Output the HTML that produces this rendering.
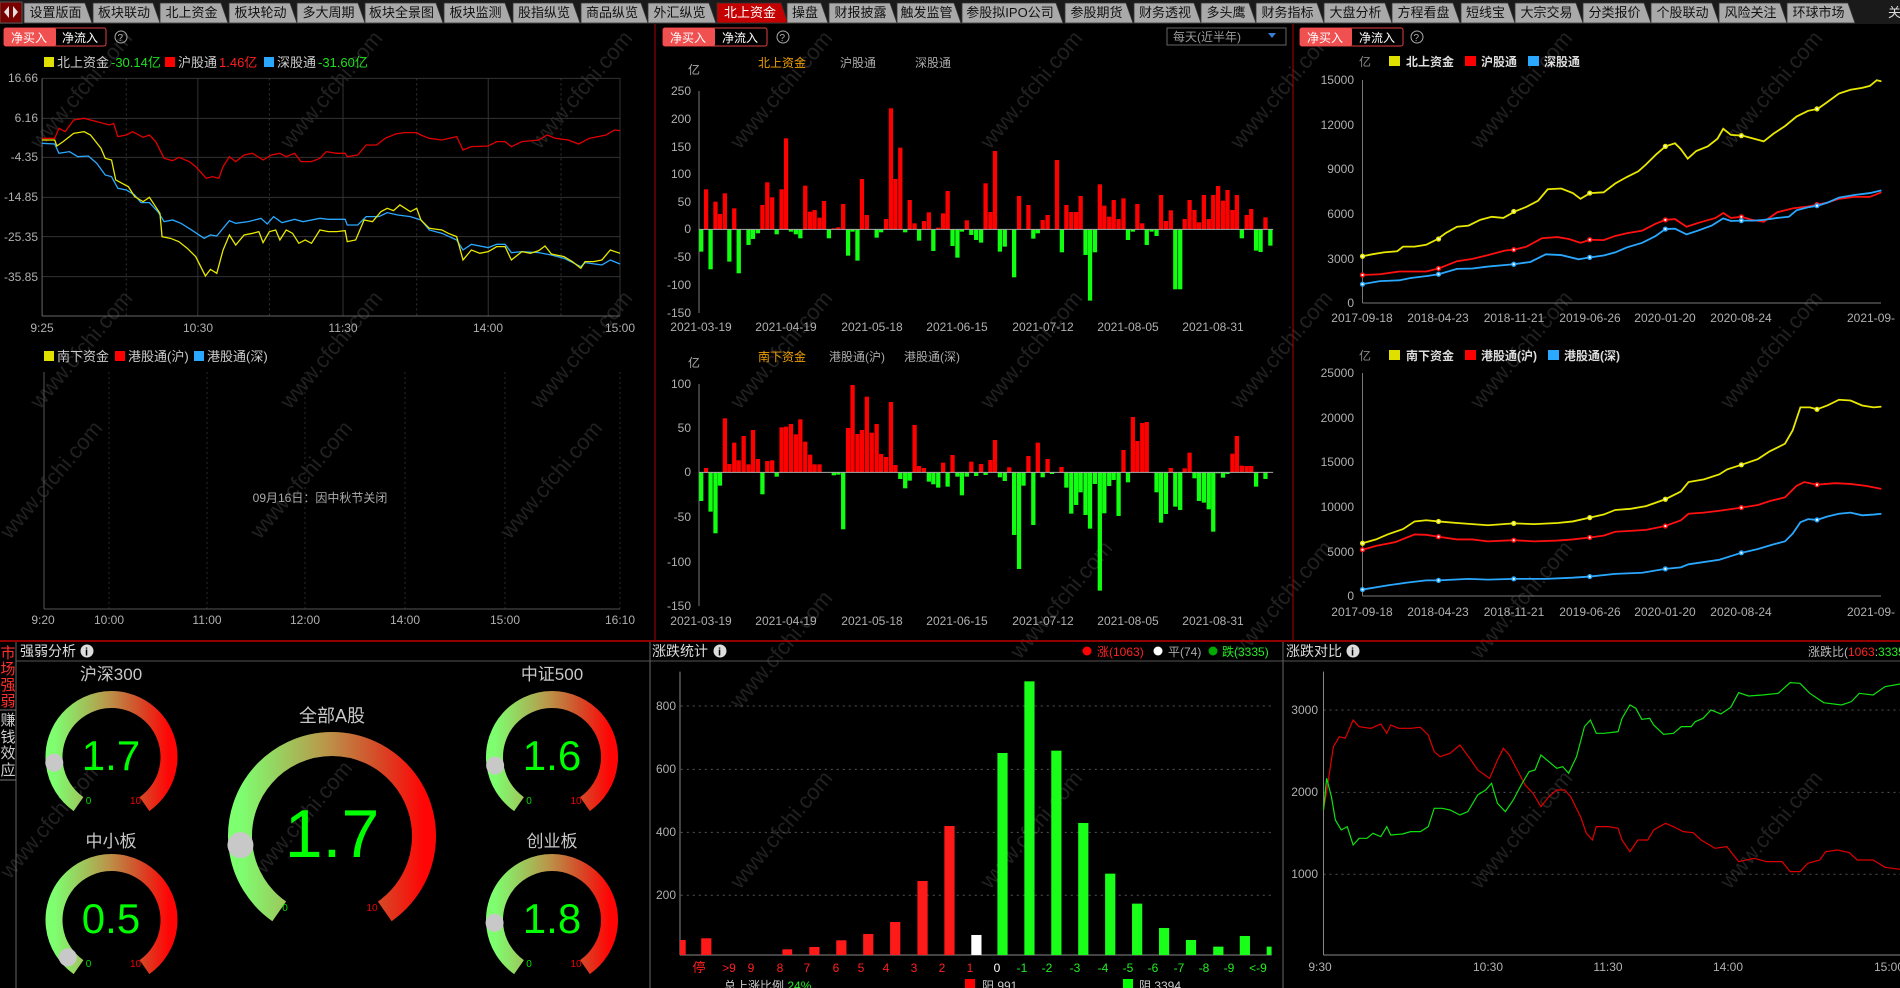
<!DOCTYPE html>
<html><head><meta charset="utf-8">
<style>
html,body{margin:0;padding:0;background:#000;width:1900px;height:988px;overflow:hidden}
svg{display:block}
text{font-family:"Liberation Sans","Noto Sans CJK SC",sans-serif}
.ax{fill:#b0b0b0;font-size:12px}
.tab{fill:#111;font-size:13px;text-anchor:middle}
.wm{fill:#3c3c3c;font-size:22px;opacity:.55}
</style></head><body>
<svg id="s" width="1900" height="988" viewBox="0 0 1900 988" xmlns="http://www.w3.org/2000/svg">
<defs>
<linearGradient id="gg" x1="0" y1="0" x2="1" y2="0">
<stop offset="0" stop-color="#7dff70"/><stop offset="0.45" stop-color="#b89a4c"/><stop offset="0.75" stop-color="#d54a28"/><stop offset="1" stop-color="#ff0505"/>
</linearGradient>
</defs>
<rect width="1900" height="988" fill="#000"/>

<!-- watermarks -->
<g class="wm">
<text transform="translate(40,150) rotate(-50)">www.cfchi.com</text>
<text transform="translate(290,150) rotate(-50)">www.cfchi.com</text>
<text transform="translate(540,150) rotate(-50)">www.cfchi.com</text>
<text transform="translate(740,150) rotate(-50)">www.cfchi.com</text>
<text transform="translate(990,150) rotate(-50)">www.cfchi.com</text>
<text transform="translate(1240,150) rotate(-50)">www.cfchi.com</text>
<text transform="translate(1480,150) rotate(-50)">www.cfchi.com</text>
<text transform="translate(1730,150) rotate(-50)">www.cfchi.com</text>
<text transform="translate(40,410) rotate(-50)">www.cfchi.com</text>
<text transform="translate(290,410) rotate(-50)">www.cfchi.com</text>
<text transform="translate(540,410) rotate(-50)">www.cfchi.com</text>
<text transform="translate(740,410) rotate(-50)">www.cfchi.com</text>
<text transform="translate(990,410) rotate(-50)">www.cfchi.com</text>
<text transform="translate(1240,410) rotate(-50)">www.cfchi.com</text>
<text transform="translate(1480,410) rotate(-50)">www.cfchi.com</text>
<text transform="translate(1730,410) rotate(-50)">www.cfchi.com</text>
<text transform="translate(10,540) rotate(-50)">www.cfchi.com</text>
<text transform="translate(260,540) rotate(-50)">www.cfchi.com</text>
<text transform="translate(510,540) rotate(-50)">www.cfchi.com</text>
<text transform="translate(1240,660) rotate(-50)">www.cfchi.com</text>
<text transform="translate(1020,660) rotate(-50)">www.cfchi.com</text>
<text transform="translate(740,710) rotate(-50)">www.cfchi.com</text>
<text transform="translate(990,890) rotate(-50)">www.cfchi.com</text>
<text transform="translate(740,890) rotate(-50)">www.cfchi.com</text>
<text transform="translate(1480,890) rotate(-50)">www.cfchi.com</text>
<text transform="translate(1730,890) rotate(-50)">www.cfchi.com</text>
<text transform="translate(260,880) rotate(-50)">www.cfchi.com</text>
<text transform="translate(10,880) rotate(-50)">www.cfchi.com</text>
<text transform="translate(1480,660) rotate(-50)">www.cfchi.com</text>
</g>

<!-- tab bar -->
<rect x="0" y="0" width="1900" height="24" fill="#1a1a1a"/>
<rect x="0" y="2" width="22" height="21" fill="#7a0000" stroke="#555"/>
<path d="M4 12 L9 6 L9 18Z M18 12 L13 6 L13 18Z" fill="#e0e0e0"/>
<g id="tabs"></g>
<text x="1888" y="17" fill="#ddd" font-size="13">关</text>

<!-- panel separators -->
<line x1="655" y1="24" x2="655" y2="640" stroke="#b00000"/>
<line x1="1293" y1="24" x2="1293" y2="640" stroke="#b00000"/>
<line x1="0" y1="641" x2="1900" y2="641" stroke="#c00000" stroke-width="1.5"/>
<line x1="16" y1="642" x2="16" y2="988" stroke="#666"/>
<line x1="650" y1="642" x2="650" y2="988" stroke="#666"/>
<line x1="1283" y1="642" x2="1283" y2="988" stroke="#666"/>
<line x1="16" y1="661" x2="1900" y2="661" stroke="#555"/>

<!-- buttons 净买入 净流入 -->
<g font-size="12">
<rect x="4" y="28" width="102" height="18" fill="#000" stroke="#e04040" rx="2"/><rect x="4" y="28" width="52" height="18" fill="#f05050" rx="2"/>
<text x="11" y="42" fill="#fff">净买入</text><text x="62" y="42" fill="#fff">净流入</text>
<circle cx="121" cy="37" r="6" fill="none" stroke="#aaa"/><text x="117.5" y="41" fill="#aaa" font-size="10">?</text>
<rect x="663" y="28" width="104" height="18" fill="#000" stroke="#e04040" rx="2"/><rect x="663" y="28" width="52" height="18" fill="#f05050" rx="2"/>
<text x="670" y="42" fill="#fff">净买入</text><text x="722" y="42" fill="#fff">净流入</text>
<circle cx="783" cy="37" r="6" fill="none" stroke="#aaa"/><text x="779.5" y="41" fill="#aaa" font-size="10">?</text>
<rect x="1300" y="28" width="103" height="18" fill="#000" stroke="#e04040" rx="2"/><rect x="1300" y="28" width="52" height="18" fill="#f05050" rx="2"/>
<text x="1307" y="42" fill="#fff">净买入</text><text x="1359" y="42" fill="#fff">净流入</text>
<circle cx="1417" cy="37" r="6" fill="none" stroke="#aaa"/><text x="1413.5" y="41" fill="#aaa" font-size="10">?</text>
<rect x="1167" y="28" width="119" height="17" fill="#000" stroke="#666"/>
<text x="1173" y="41" fill="#999">每天(近半年)</text><path d="M1268 33 L1276 33 L1272 38Z" fill="#3a7bd5"/>
</g>

<!-- ===== TOP LEFT ===== -->
<g font-size="13">
<rect x="44" y="57" width="10" height="10" fill="#e0e000"/><text x="57" y="67" fill="#ccc">北上资金</text><text x="111" y="67" fill="#1ee01e">-30.14亿</text>
<rect x="165" y="57" width="10" height="10" fill="#f00"/><text x="178" y="67" fill="#ccc">沪股通</text><text x="219" y="67" fill="#ff2020">1.46亿</text>
<rect x="264" y="57" width="10" height="10" fill="#2aa8ff"/><text x="277" y="67" fill="#ccc">深股通</text><text x="318" y="67" fill="#1ee01e">-31.60亿</text>
</g>
<g class="ax" text-anchor="end">
<text x="38" y="82">16.66</text><text x="38" y="122">6.16</text><text x="38" y="161">-4.35</text><text x="38" y="201">-14.85</text><text x="38" y="241">-25.35</text><text x="38" y="281">-35.85</text>
</g>
<g class="ax" text-anchor="middle">
<text x="42" y="332">9:25</text><text x="198" y="332">10:30</text><text x="343" y="332">11:30</text><text x="488" y="332">14:00</text><text x="620" y="332">15:00</text>
</g>
<g transform="translate(0,60) scale(0.4209,0.3333)" fill="none">
<g stroke="#333" vector-effect="non-scaling-stroke">
<line x1="100" y1="55" x2="1473" y2="55" vector-effect="non-scaling-stroke"/>
<line x1="100" y1="175" x2="1473" y2="175" vector-effect="non-scaling-stroke"/>
<line x1="100" y1="292" x2="1473" y2="292" vector-effect="non-scaling-stroke"/>
<line x1="100" y1="412" x2="1473" y2="412" vector-effect="non-scaling-stroke"/>
<line x1="100" y1="530" x2="1473" y2="530" vector-effect="non-scaling-stroke"/>
<line x1="100" y1="650" x2="1473" y2="650" vector-effect="non-scaling-stroke"/>
<line x1="470" y1="55" x2="470" y2="768" vector-effect="non-scaling-stroke"/>
<line x1="815" y1="55" x2="815" y2="768" vector-effect="non-scaling-stroke"/>
<line x1="1160" y1="55" x2="1160" y2="768" vector-effect="non-scaling-stroke"/>
<line x1="1473" y1="55" x2="1473" y2="768" vector-effect="non-scaling-stroke"/>
<line x1="300" y1="55" x2="300" y2="768" stroke-dasharray="2 3" vector-effect="non-scaling-stroke"/>
<line x1="640" y1="55" x2="640" y2="768" stroke-dasharray="2 3" vector-effect="non-scaling-stroke"/>
<line x1="990" y1="55" x2="990" y2="768" stroke-dasharray="2 3" vector-effect="non-scaling-stroke"/>
<line x1="1333" y1="55" x2="1333" y2="768" stroke-dasharray="2 3" vector-effect="non-scaling-stroke"/>
</g>
<line x1="100" y1="55" x2="100" y2="768" stroke="#666" vector-effect="non-scaling-stroke"/>
<line x1="100" y1="768" x2="1473" y2="768" stroke="#666" vector-effect="non-scaling-stroke"/>
<polyline stroke="#e00000" stroke-width="1.3" vector-effect="non-scaling-stroke" points="100,235 130,235 140,205 155,215 175,180 200,175 230,185 260,195 270,190 280,230 300,225 315,215 340,232 355,225 370,245 390,295 410,302 425,292 450,305 465,320 490,355 505,350 520,355 530,320 545,290 560,305 580,285 600,280 625,300 645,285 665,280 680,290 700,280 715,305 740,305 760,295 775,275 800,280 820,280 825,290 850,285 870,255 895,255 915,235 940,222 960,218 990,218 1000,225 1020,235 1050,240 1085,230 1100,270 1120,260 1160,258 1180,245 1200,245 1215,260 1240,245 1280,240 1300,225 1320,235 1350,240 1375,252 1400,235 1440,225 1460,210 1473,212"/>
<polyline stroke="#2aa8ff" stroke-width="1.3" vector-effect="non-scaling-stroke" points="100,250 130,252 140,280 165,275 185,290 210,288 230,310 250,345 265,350 280,385 300,390 320,405 335,428 355,428 375,455 390,485 410,480 430,490 455,510 485,535 500,525 515,528 545,482 560,490 590,485 620,475 635,492 650,470 670,488 700,478 720,485 760,475 780,478 820,478 825,495 850,495 870,470 900,470 920,458 945,465 975,470 1000,480 1020,510 1050,520 1085,540 1100,570 1120,553 1160,563 1180,553 1200,553 1215,578 1240,575 1280,578 1310,585 1340,595 1380,620 1390,608 1430,615 1450,600 1473,612"/>
<polyline stroke="#e8e800" stroke-width="1.3" vector-effect="non-scaling-stroke" points="100,240 130,240 135,258 150,245 175,220 200,215 215,225 240,265 250,295 265,300 275,360 290,370 305,380 320,410 340,425 355,412 380,460 385,530 405,535 425,545 445,565 465,590 488,648 500,628 515,640 530,570 545,525 560,555 580,525 600,520 615,515 625,548 640,515 655,510 665,540 680,510 695,520 710,550 725,540 740,550 760,510 780,515 800,515 820,512 825,545 845,540 865,480 885,485 905,455 920,445 935,452 950,435 975,455 990,445 1000,480 1020,505 1050,510 1065,520 1085,530 1100,600 1120,570 1140,580 1160,575 1180,560 1200,560 1215,600 1240,575 1260,580 1280,572 1295,558 1310,582 1340,590 1360,605 1380,625 1390,605 1410,605 1430,600 1450,570 1473,580"/>
</g>
<!-- lower left -->
<g font-size="13">
<rect x="44" y="351" width="10" height="10" fill="#e0e000"/><text x="57" y="361" fill="#ccc">南下资金</text>
<rect x="115" y="351" width="10" height="10" fill="#f00"/><text x="128" y="361" fill="#ccc">港股通(沪)</text>
<rect x="194" y="351" width="10" height="10" fill="#2aa8ff"/><text x="207" y="361" fill="#ccc">港股通(深)</text>
</g>
<g stroke="#2a2a2a" stroke-dasharray="2 3">
<line x1="109" y1="372" x2="109" y2="609"/><line x1="207" y1="372" x2="207" y2="609"/><line x1="305" y1="372" x2="305" y2="609"/><line x1="405" y1="372" x2="405" y2="609"/><line x1="505" y1="372" x2="505" y2="609"/><line x1="620" y1="372" x2="620" y2="609"/>
</g>
<line x1="44" y1="372" x2="44" y2="609" stroke="#555"/>
<line x1="44" y1="609" x2="620" y2="609" stroke="#555"/>
<text x="320" y="502" fill="#aaa" font-size="12" text-anchor="middle">09月16日：因中秋节关闭</text>
<g class="ax" text-anchor="middle">
<text x="43" y="624">9:20</text><text x="109" y="624">10:00</text><text x="207" y="624">11:00</text><text x="305" y="624">12:00</text><text x="405" y="624">14:00</text><text x="505" y="624">15:00</text><text x="620" y="624">16:10</text>
</g>

<!-- ===== TOP MIDDLE ===== -->
<g font-size="12">
<text x="758" y="67" fill="#f0a000">北上资金</text><text x="840" y="67" fill="#aaa">沪股通</text><text x="915" y="67" fill="#aaa">深股通</text>
<text x="688" y="74" fill="#aaa">亿</text>
<text x="758" y="361" fill="#f0a000">南下资金</text><text x="829" y="361" fill="#aaa">港股通(沪)</text><text x="904" y="361" fill="#aaa">港股通(深)</text>
<text x="688" y="367" fill="#aaa">亿</text>
</g>
<g class="ax" text-anchor="end">
<text x="691" y="95">250</text><text x="691" y="123">200</text><text x="691" y="151">150</text><text x="691" y="178">100</text><text x="691" y="206">50</text><text x="691" y="233">0</text><text x="691" y="261">-50</text><text x="691" y="289">-100</text><text x="691" y="317">-150</text>
<text x="691" y="388">100</text><text x="691" y="432">50</text><text x="691" y="476">0</text><text x="691" y="521">-50</text><text x="691" y="566">-100</text><text x="691" y="610">-150</text>
</g>
<g class="ax" text-anchor="middle">
<text x="701" y="331">2021-03-19</text><text x="786" y="331">2021-04-19</text><text x="872" y="331">2021-05-18</text><text x="957" y="331">2021-06-15</text><text x="1043" y="331">2021-07-12</text><text x="1128" y="331">2021-08-05</text><text x="1213" y="331">2021-08-31</text>
<text x="701" y="625">2021-03-19</text><text x="786" y="625">2021-04-19</text><text x="872" y="625">2021-05-18</text><text x="957" y="625">2021-06-15</text><text x="1043" y="625">2021-07-12</text><text x="1128" y="625">2021-08-05</text><text x="1213" y="625">2021-08-31</text>
</g>
<line x1="699" y1="91" x2="699" y2="313" stroke="#777"/>
<line x1="699" y1="384" x2="699" y2="606" stroke="#777"/>
<g id="m1" transform="translate(655,40) scale(0.408,0.3333)"></g>
<g id="m2" transform="translate(655,340) scale(0.408,0.3333)"></g>

<!-- ===== TOP RIGHT ===== -->
<g font-size="12" font-weight="bold">
<text x="1359" y="66" fill="#888" font-weight="normal">亿</text>
<rect x="1389" y="56" width="11" height="10" fill="#e0e000"/><text x="1406" y="66" fill="#ddd">北上资金</text>
<rect x="1465" y="56" width="11" height="10" fill="#f00"/><text x="1481" y="66" fill="#ddd">沪股通</text>
<rect x="1528" y="56" width="11" height="10" fill="#2aa8ff"/><text x="1544" y="66" fill="#ddd">深股通</text>
<text x="1359" y="360" fill="#888" font-weight="normal">亿</text>
<rect x="1389" y="350" width="11" height="10" fill="#e0e000"/><text x="1406" y="360" fill="#ddd">南下资金</text>
<rect x="1465" y="350" width="11" height="10" fill="#f00"/><text x="1481" y="360" fill="#ddd">港股通(沪)</text>
<rect x="1548" y="350" width="11" height="10" fill="#2aa8ff"/><text x="1564" y="360" fill="#ddd">港股通(深)</text>
</g>
<g class="ax" text-anchor="end" fill="#999">
<text x="1354" y="84">15000</text><text x="1354" y="129">12000</text><text x="1354" y="173">9000</text><text x="1354" y="218">6000</text><text x="1354" y="263">3000</text><text x="1354" y="307">0</text>
<text x="1354" y="377">25000</text><text x="1354" y="422">20000</text><text x="1354" y="466">15000</text><text x="1354" y="511">10000</text><text x="1354" y="556">5000</text><text x="1354" y="600">0</text>
</g>
<g class="ax" text-anchor="middle" fill="#999">
<text x="1362" y="322">2017-09-18</text><text x="1438" y="322">2018-04-23</text><text x="1514" y="322">2018-11-21</text><text x="1590" y="322">2019-06-26</text><text x="1665" y="322">2020-01-20</text><text x="1741" y="322">2020-08-24</text><text x="1847" y="322" text-anchor="start">2021-09-</text>
<text x="1362" y="616">2017-09-18</text><text x="1438" y="616">2018-04-23</text><text x="1514" y="616">2018-11-21</text><text x="1590" y="616">2019-06-26</text><text x="1665" y="616">2020-01-20</text><text x="1741" y="616">2020-08-24</text><text x="1847" y="616" text-anchor="start">2021-09-</text>
</g>
<g stroke="#777">
<line x1="1362.5" y1="80" x2="1362.5" y2="303"/><line x1="1362.5" y1="303" x2="1881" y2="303"/>
<line x1="1362.5" y1="373" x2="1362.5" y2="596"/><line x1="1362.5" y1="596" x2="1881" y2="596"/>
</g>
<g transform="translate(1295,40) scale(0.3858,0.3827)" fill="none" stroke-width="1.8">
<polyline stroke="#e8e800" vector-effect="non-scaling-stroke" points="175,565 200,560 230,555 265,552 280,540 310,540 340,535 370,520 390,505 420,488 450,485 480,470 510,462 540,465 570,448 600,436 630,420 655,390 690,388 720,400 740,415 765,400 800,398 830,375 860,358 890,343 910,325 935,300 960,278 985,270 1000,285 1018,310 1040,290 1070,278 1095,258 1110,232 1130,248 1160,250 1190,258 1215,265 1240,245 1270,225 1300,200 1330,185 1355,180 1380,162 1410,140 1440,130 1470,125 1490,120 1508,105 1520,108"/>
<polyline stroke="#ff1010" vector-effect="non-scaling-stroke" points="175,614 220,612 270,605 300,605 340,605 372,597 420,578 460,572 500,562 545,550 567,548 600,540 640,518 680,515 710,520 740,530 765,522 800,523 830,512 860,505 900,498 935,480 960,470 985,468 1015,488 1045,478 1090,465 1110,452 1130,465 1157,462 1185,470 1215,475 1250,450 1290,440 1330,435 1355,430 1380,425 1410,415 1450,410 1490,410 1520,398"/>
<polyline stroke="#2aa8ff" vector-effect="non-scaling-stroke" points="175,638 220,630 270,628 300,622 340,617 372,612 420,598 460,597 500,592 545,588 567,586 610,580 650,560 690,562 735,573 765,568 800,563 830,555 860,542 900,530 935,512 960,494 985,493 1015,508 1045,498 1080,485 1110,466 1130,473 1157,472 1190,472 1215,470 1250,465 1280,462 1300,445 1330,437 1355,433 1380,425 1410,412 1450,405 1490,400 1520,393"/>
<polyline stroke="#e8e800" vector-effect="non-scaling-stroke" points="175,1315 210,1305 240,1292 280,1278 310,1258 340,1255 372,1258 420,1262 460,1265 500,1268 567,1263 620,1265 680,1262 720,1258 764,1248 800,1240 830,1228 870,1225 910,1218 960,1200 1000,1180 1020,1155 1060,1148 1100,1135 1120,1122 1157,1110 1200,1095 1230,1075 1270,1055 1290,1020 1310,960 1335,960 1353,965 1380,955 1410,940 1440,942 1470,955 1500,960 1520,958"/>
<polyline stroke="#ff1010" vector-effect="non-scaling-stroke" points="175,1332 210,1322 260,1312 290,1300 310,1292 340,1293 372,1298 420,1305 460,1305 500,1310 567,1307 620,1310 680,1308 720,1305 764,1300 800,1295 830,1285 880,1282 910,1280 960,1270 1000,1255 1020,1238 1060,1235 1100,1230 1157,1222 1200,1215 1230,1205 1270,1195 1300,1165 1320,1155 1353,1162 1400,1158 1440,1160 1480,1165 1520,1173"/>
<polyline stroke="#2aa8ff" vector-effect="non-scaling-stroke" points="175,1436 240,1425 290,1418 340,1412 372,1412 450,1408 500,1410 567,1408 650,1408 720,1405 764,1402 830,1395 900,1392 960,1382 1000,1378 1020,1370 1100,1358 1157,1340 1200,1330 1240,1318 1270,1310 1290,1290 1310,1260 1330,1252 1353,1254 1380,1245 1410,1238 1440,1235 1470,1242 1500,1240 1520,1238"/>
</g>
<g id="dots"></g>

<!-- ===== BOTTOM LEFT ===== -->
<g font-size="15" fill="#ff3030" text-anchor="middle">
<text x="8" y="658">市</text><text x="8" y="674">场</text><text x="8" y="690">强</text><text x="8" y="706">弱</text>
</g>
<line x1="0" y1="710" x2="16" y2="710" stroke="#777"/>
<g font-size="15" fill="#ccc" text-anchor="middle">
<text x="8" y="725">赚</text><text x="8" y="742">钱</text><text x="8" y="758">效</text><text x="8" y="775">应</text>
</g>
<line x1="0" y1="780" x2="16" y2="780" stroke="#777"/>
<text x="20" y="656" fill="#ddd" font-size="14">强弱分析</text>
<circle cx="87" cy="651" r="6.5" fill="#ddd"/><text x="85" y="655.5" font-size="11" font-weight="bold" fill="#000">i</text>

<g id="gauges"></g>
<g fill="#c8c8c8" font-size="17" text-anchor="middle">
<text x="111" y="680">沪深300</text><text x="552" y="680">中证500</text><text x="111" y="847">中小板</text><text x="552" y="847">创业板</text>
<text x="332" y="722" font-size="18">全部A股</text>
</g>
<g fill="#00ff00" text-anchor="middle" font-size="42">
<text x="111" y="770">1.7</text><text x="552" y="770">1.6</text><text x="111" y="933">0.5</text><text x="552" y="933">1.8</text>
<text x="332" y="857" font-size="68">1.7</text>
</g>

<!-- ===== BOTTOM MIDDLE ===== -->
<text x="652" y="656" fill="#ddd" font-size="14">涨跌统计</text>
<circle cx="720" cy="651" r="6.5" fill="#ddd"/><text x="718" y="655.5" font-size="11" font-weight="bold" fill="#000">i</text>
<circle cx="1087" cy="651" r="4.5" fill="#f00"/><text x="1097" y="656" fill="#f22" font-size="12">涨(1063)</text>
<circle cx="1158" cy="651" r="4.5" fill="#fff"/><text x="1168" y="656" fill="#aaa" font-size="12">平(74)</text>
<circle cx="1213" cy="651" r="4.5" fill="#0a0"/><text x="1222" y="656" fill="#2e2" font-size="12">跌(3335)</text>
<g class="ax" text-anchor="end" font-size="11">
<text x="676" y="710">800</text><text x="676" y="773">600</text><text x="676" y="836">400</text><text x="676" y="899">200</text>
</g>
<g transform="translate(640,630) scale(0.408,0.3333)">
<g stroke="#555" stroke-dasharray="2 4">
<line x1="100" y1="228" x2="1548" y2="228" vector-effect="non-scaling-stroke"/><line x1="100" y1="418" x2="1548" y2="418" vector-effect="non-scaling-stroke"/><line x1="100" y1="607" x2="1548" y2="607" vector-effect="non-scaling-stroke"/><line x1="100" y1="796" x2="1548" y2="796" vector-effect="non-scaling-stroke"/>
</g>
<line x1="98" y1="125" x2="98" y2="975" stroke="#888" vector-effect="non-scaling-stroke"/>
<line x1="98" y1="975" x2="1548" y2="975" stroke="#888" vector-effect="non-scaling-stroke"/>
<g fill="#ff1a1a">
<rect x="98" y="930" width="14" height="45"/><rect x="150" y="925" width="25" height="50"/><rect x="349" y="958" width="24" height="17"/><rect x="415" y="951" width="25" height="24"/><rect x="481" y="931" width="25" height="44"/><rect x="547" y="912" width="25" height="63"/><rect x="613" y="876" width="25" height="99"/><rect x="680" y="753" width="25" height="222"/><rect x="746" y="588" width="25" height="387"/>
</g>
<rect x="812" y="915" width="25" height="60" fill="#fff"/>
<g fill="#19ff19">
<rect x="876" y="369" width="25" height="606"/><rect x="942" y="154" width="25" height="821"/><rect x="1008" y="362" width="25" height="613"/><rect x="1074" y="579" width="25" height="396"/><rect x="1140" y="731" width="25" height="244"/><rect x="1206" y="821" width="25" height="154"/><rect x="1272" y="894" width="25" height="81"/><rect x="1338" y="930" width="25" height="45"/><rect x="1405" y="950" width="25" height="25"/><rect x="1470" y="918" width="25" height="57"/><rect x="1536" y="950" width="12" height="25"/>
</g>
</g>
<g font-size="12" text-anchor="middle" fill="#ff2020">
<text x="699" y="972" font-size="13">停</text><text x="729" y="972">&gt;9</text><text x="751" y="972">9</text><text x="780" y="972">8</text><text x="807" y="972">7</text><text x="836" y="972">6</text><text x="861" y="972">5</text><text x="886" y="972">4</text><text x="914" y="972">3</text><text x="942" y="972">2</text><text x="970" y="972">1</text>
<text x="997" y="972" fill="#fff">0</text>
<g fill="#22ee22"><text x="1022" y="972">-1</text><text x="1047" y="972">-2</text><text x="1075" y="972">-3</text><text x="1103" y="972">-4</text><text x="1128" y="972">-5</text><text x="1153" y="972">-6</text><text x="1179" y="972">-7</text><text x="1204" y="972">-8</text><text x="1229" y="972">-9</text><text x="1258" y="972">&lt;-9</text></g>
</g>
<g font-size="12">
<text x="724" y="990" fill="#ccc">总上涨比例 <tspan fill="#22ee22">24%</tspan></text>
<rect x="965" y="979" width="10" height="10" fill="#f00"/><text x="982" y="990" fill="#ccc">阳 991</text>
<rect x="1123" y="979" width="10" height="10" fill="#0f0"/><text x="1139" y="990" fill="#ccc">阴 3394</text>
</g>

<!-- ===== BOTTOM RIGHT ===== -->
<text x="1286" y="656" fill="#ddd" font-size="14">涨跌对比</text>
<circle cx="1353" cy="651" r="6.5" fill="#ddd"/><text x="1351" y="655.5" font-size="11" font-weight="bold" fill="#000">i</text>
<text x="1808" y="656" font-size="12" fill="#bbb">涨跌比(<tspan fill="#f22">1063</tspan>:<tspan fill="#2e2">3335</tspan>)</text>
<g class="ax" text-anchor="end" font-size="11">
<text x="1318" y="714">3000</text><text x="1318" y="796">2000</text><text x="1318" y="878">1000</text>
</g>
<g class="ax" text-anchor="middle">
<text x="1320" y="971">9:30</text><text x="1488" y="971">10:30</text><text x="1608" y="971">11:30</text><text x="1728" y="971">14:00</text><text x="1889" y="971">15:00</text>
</g>
<g transform="translate(1280,630) scale(0.3954,0.3333)" fill="none">
<g stroke="#555" stroke-dasharray="2 4">
<line x1="110" y1="240" x2="1568" y2="240" vector-effect="non-scaling-stroke"/><line x1="110" y1="487" x2="1568" y2="487" vector-effect="non-scaling-stroke"/><line x1="110" y1="733" x2="1568" y2="733" vector-effect="non-scaling-stroke"/>
</g>
<line x1="110" y1="125" x2="110" y2="975" stroke="#888" vector-effect="non-scaling-stroke"/>
<line x1="110" y1="975" x2="1568" y2="975" stroke="#888" vector-effect="non-scaling-stroke"/>
<polyline stroke="#e00000" stroke-width="1.2" vector-effect="non-scaling-stroke" points="110,540 120,470 135,350 150,320 165,325 185,270 200,290 230,295 255,282 270,310 280,285 300,295 330,295 355,292 375,315 390,365 405,380 430,370 455,345 480,385 500,420 530,445 550,390 565,355 580,375 600,420 620,465 640,490 660,530 680,500 700,480 720,480 735,500 760,560 775,610 790,630 800,590 830,590 855,595 865,630 885,665 905,630 930,630 945,600 975,580 995,590 1020,605 1045,608 1065,630 1100,655 1130,650 1160,695 1200,685 1230,695 1270,695 1290,725 1315,725 1335,700 1365,690 1380,665 1410,660 1440,668 1460,690 1500,690 1530,712 1568,718"/>
<polyline stroke="#10e010" stroke-width="1.2" vector-effect="non-scaling-stroke" points="110,540 118,445 130,500 140,570 155,600 170,590 185,645 200,625 220,625 235,610 255,620 270,590 280,615 310,612 330,605 355,605 375,590 390,535 410,535 430,540 455,555 475,545 500,495 520,480 535,460 550,520 570,545 590,510 610,465 630,425 645,420 660,375 680,395 700,415 715,410 730,430 750,380 770,290 785,270 800,310 820,310 855,305 865,265 885,225 900,235 915,268 935,265 945,285 970,313 995,310 1015,290 1040,290 1050,275 1070,265 1090,240 1115,252 1140,232 1160,188 1185,198 1220,195 1260,190 1290,158 1315,160 1340,190 1375,218 1420,225 1445,215 1465,190 1500,195 1530,170 1568,162"/>
</g>
</svg>
<script>
(function(){
var NS="http://www.w3.org/2000/svg";
function el(t,a,p){var e=document.createElementNS(NS,t);for(var k in a)e.setAttribute(k,a[k]);p.appendChild(e);return e;}
// tabs
var tabs=[[24,92,"设置版面"],[93,160,"板块联动"],[160,228,"北上资金"],[229,297,"板块轮动"],[297,365,"多大周期"],[365,443,"板块全景图"],[444,512,"板块监测"],[513,580,"股指纵览"],[581,648,"商品纵览"],[648,716,"外汇纵览"],[717,788,"北上资金",1],[787,828,"操盘"],[829,897,"财报披露"],[897,961,"触发监管"],[962,1063,"参股拟IPO公司"],[1065,1133,"参股期货"],[1134,1201,"财务透视"],[1201,1256,"多头鹰"],[1256,1324,"财务指标"],[1324,1392,"大盘分析"],[1392,1460,"方程看盘"],[1461,1515,"短线宝"],[1515,1583,"大宗交易"],[1583,1651,"分类报价"],[1651,1719,"个股联动"],[1719,1787,"风险关注"],[1787,1855,"环球市场"]];
var tg=document.getElementById("tabs");
tabs.forEach(function(t){
 var a=t[3];
 el("path",{d:"M"+t[0]+" 23 L"+t[0]+" 3 L"+(t[1]-7)+" 3 L"+t[1]+" 23Z",fill:a?"#c40000":"#a9a9a9",stroke:"#333","stroke-width":"0.8"},tg);
 var x=el("text",{x:(t[0]+t[1]-5)/2,y:17,"class":"tab",fill:a?"#fff":"#111"},tg);x.style.fill=a?"#fff":"#111";x.textContent=t[2];
});
// bars
function bars(id,base,d){var g=document.getElementById(id);
 for(var i=0;i<d.length;i+=2){var x=d[i],y=d[i+1];
  if(y<base)el("rect",{x:x,y:y,width:10.5,height:base-y,fill:"#ff0000"},g);
  else el("rect",{x:x,y:base,width:10.5,height:y-base,fill:"#11ff11"},g);}
 el("line",{x1:108,y1:base,x2:1515,y2:base,stroke:"#aaa","vector-effect":"non-scaling-stroke"},g);
}
bars("m1",568,[108,635,120,448,131,688,143,485,154,522,166,460,177,665,189,505,200,700,224,615,235,597,247,580,258,495,270,427,282,472,293,583,305,448,316,295,328,575,340,583,351,595,363,437,375,515,386,510,398,533,409,483,421,595,433,565,444,562,456,492,468,647,479,575,491,662,502,417,514,525,538,593,549,577,561,537,573,205,584,417,596,323,608,577,619,480,631,550,642,602,654,543,666,517,677,633,689,563,701,520,712,453,724,618,736,653,747,575,759,541,770,585,782,600,794,608,805,430,817,516,828,333,840,635,852,620,875,712,887,468,910,495,922,596,933,580,945,540,957,525,980,360,992,637,1003,495,1015,516,1027,516,1038,468,1050,645,1061,782,1073,637,1085,433,1096,497,1108,530,1119,480,1131,537,1143,475,1154,600,1166,575,1177,492,1189,550,1200,615,1212,575,1224,588,1235,465,1247,543,1259,511,1270,748,1282,748,1293,537,1305,480,1317,510,1328,547,1340,465,1352,537,1363,465,1375,438,1387,482,1398,450,1410,510,1421,465,1433,595,1445,525,1456,507,1468,632,1479,636,1491,532,1503,617]);
bars("m2",397,[108,483,120,384,131,515,143,580,154,437,166,235,177,372,189,308,200,361,212,288,224,373,235,270,247,357,258,463,270,363,282,361,293,410,305,262,316,260,328,252,340,283,351,238,363,305,375,344,386,373,398,373,433,406,444,404,456,568,468,264,479,135,491,282,502,270,514,170,526,278,538,252,549,342,561,351,573,186,584,375,596,417,608,445,619,422,631,255,642,378,654,384,666,425,677,433,689,443,701,368,712,440,724,345,736,410,747,466,759,410,770,365,782,408,794,372,805,405,817,360,828,300,840,412,852,423,863,382,875,585,887,687,898,437,910,348,922,555,933,308,945,412,957,357,968,402,991,381,1003,443,1015,521,1027,495,1038,457,1050,525,1061,566,1073,432,1085,752,1096,520,1108,438,1119,420,1131,528,1143,330,1154,427,1166,231,1177,303,1189,249,1200,246,1224,457,1235,548,1247,522,1259,384,1270,500,1282,510,1293,385,1305,338,1317,415,1328,483,1340,488,1352,508,1363,575,1375,400,1387,413,1398,402,1410,341,1421,288,1433,377,1445,378,1456,378,1468,440,1491,417]);
// dots on right charts
var dg=document.getElementById("dots");
function zx(x){return 1295+x/2.592} function zy(y){return 40+y/2.613}
var dl=[[[175,565],[372,520],[567,448],[764,400],[960,278],[1157,250],[1353,180],"#e8e800"],
[[175,614],[372,597],[567,548],[764,522],[960,470],[1157,462],[1353,430],"#ff1010"],
[[175,638],[372,612],[567,586],[764,568],[960,494],[1157,472],[1353,433],"#2aa8ff"],
[[175,1315],[372,1258],[567,1263],[764,1248],[960,1200],[1157,1110],[1353,965],"#e8e800"],
[[175,1332],[372,1298],[567,1307],[764,1300],[960,1270],[1157,1222],[1353,1162],"#ff1010"],
[[175,1436],[372,1412],[567,1408],[764,1402],[960,1382],[1157,1340],[1353,1254],"#2aa8ff"]];
dl.forEach(function(s){var c=s[7];for(var i=0;i<7;i++){el("circle",{cx:zx(s[i][0]),cy:zy(s[i][1]),r:2.6,fill:c},dg);el("circle",{cx:zx(s[i][0]),cy:zy(s[i][1]),r:1.1,fill:"#fff"},dg);}});
// gauges
var gg=document.getElementById("gauges");
function gauge(cx,cy,r,sw,v,big){
 var a1=125*Math.PI/180,a2=55*Math.PI/180;
 var sx=cx+r*Math.cos(a1),sy=cy+r*Math.sin(a1),ex=cx+r*Math.cos(a2),ey=cy+r*Math.sin(a2);
 el("path",{d:"M"+sx+" "+sy+" A"+r+" "+r+" 0 1 1 "+ex+" "+ey,fill:"none",stroke:"url(#gg)","stroke-width":sw},gg);
 var a=(125+v/10*290)*Math.PI/180;
 el("circle",{cx:cx+r*Math.cos(a),cy:cy+r*Math.sin(a),r:big?13:9,fill:"#c8c8c8"},gg);
 var o=big?[47,40,71]:[23,24,43];
 var t=el("text",{x:cx-o[0],y:cy+o[2]+4,fill:"#00dd00","font-size":"10","text-anchor":"middle"},gg);t.textContent="0";
 t=el("text",{x:cx+o[1],y:cy+o[2]+4,fill:"#ee0000","font-size":"10","text-anchor":"middle"},gg);t.textContent="10";
}
gauge(111.5,757,57.5,17,1.7);gauge(552,757,57.5,17,1.6);gauge(111.5,920,57.5,17,0.5);gauge(552,920,57.5,17,1.8);
gauge(332,836,92,24,1.7,true);
})();
</script>
</body></html>
